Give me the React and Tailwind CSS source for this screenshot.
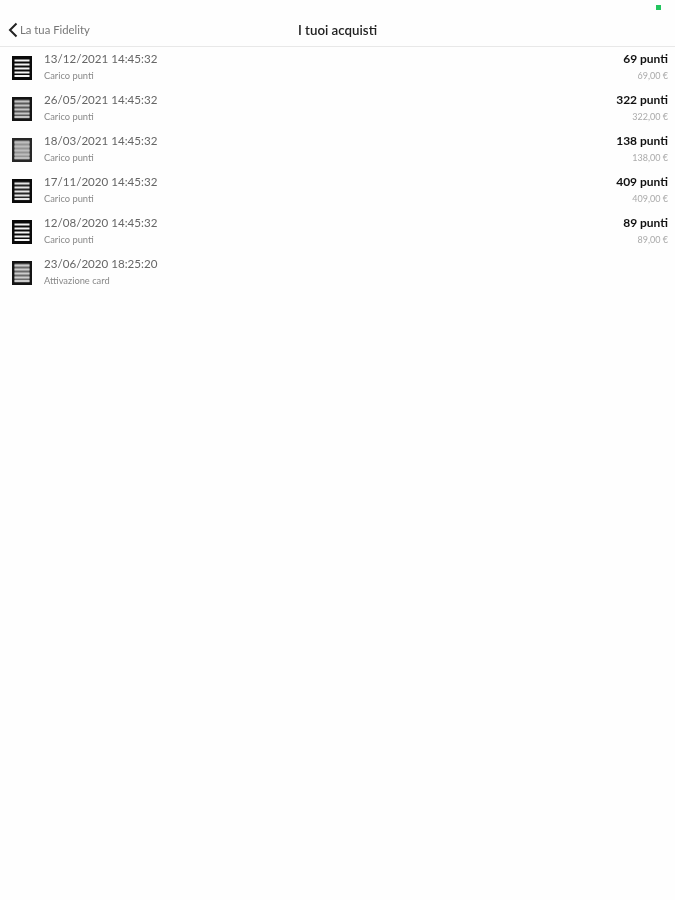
const rows = [
  { date: "13/12/2021 14:45:32", sub: "Carico punti", pts: "69 punti", eur: "69,00 €", line: "#f4f4f4", inner: "#0a0a0a", frame: "#0a0a0a" },
  { date: "26/05/2021 14:45:32", sub: "Carico punti", pts: "322 punti", eur: "322,00 €", line: "#c4c4c4", inner: "#5a5a5a", frame: "#141414" },
  { date: "18/03/2021 14:45:32", sub: "Carico punti", pts: "138 punti", eur: "138,00 €", line: "#bdbdbd", inner: "#949494", frame: "#262626" },
  { date: "17/11/2020 14:45:32", sub: "Carico punti", pts: "409 punti", eur: "409,00 €", line: "#e4e4e4", inner: "#262626", frame: "#0a0a0a" },
  { date: "12/08/2020 14:45:32", sub: "Carico punti", pts: "89 punti", eur: "89,00 €", line: "#f4f4f4", inner: "#0a0a0a", frame: "#0a0a0a" },
  { date: "23/06/2020 18:25:20", sub: "Attivazione card", pts: "", eur: "", line: "#cccccc", inner: "#6a6a6a", frame: "#141414" },
];

function DocIcon({ line, inner, frame }) {
  return (
    <svg width="20" height="24" viewBox="0 0 20 24" className="shrink-0">
      <rect x="0" y="0" width="20" height="24" fill={frame} />
      <rect x="2.5" y="2.5" width="15" height="19" fill={inner} />
      {[3.5, 7.5, 11.5, 15.5, 19].map((y) => (
        <rect key={y} x="2.5" y={y} width="15" height="2" fill={line} />
      ))}
    </svg>
  );
}

export default function App() {
  return (
    <div className="min-h-[900px] bg-[#fefefe] font-['Lato','Liberation_Sans',sans-serif] blur-[0.5px]">
      <div className="flex justify-end h-[14px] pr-[14px] pt-[5px]">
        <div className="w-[5px] h-[5px] bg-[#22c55e]" />
      </div>
      <header className="relative h-[33px] border-b border-[#e8e8e8] flex items-center justify-center">
        <div className="absolute left-[8px] top-[8px] flex items-center gap-[2px]">
          <svg width="10" height="16" viewBox="0 0 10 16" fill="none">
            <path d="M8.5 1.5 L2 8 L8.5 14.5" stroke="#222" strokeWidth="2" />
          </svg>
          <span className="text-[11.3px] leading-[16px] text-[#777]">La tua Fidelity</span>
        </div>
        <span className="text-[13.3px] leading-[16px] text-[#222] font-semibold">I tuoi acquisti</span>
      </header>
      <main>
        {rows.map((r) => (
          <div key={r.date} className="h-[41px] flex items-center pl-[12px] pr-[7px] gap-[12px]">
            <DocIcon line={r.line} inner={r.inner} frame={r.frame} />
            <div className="flex-1 flex flex-col gap-[5px] pb-[2px]">
              <div className="flex justify-between items-center h-[14px]">
                <span className="text-[11.6px] text-[#666]">{r.date}</span>
                <span className="text-[12px] font-bold text-[#111]">{r.pts}</span>
              </div>
              <div className="flex justify-between items-center h-[10px]">
                <span className="text-[9.3px] text-[#888]">{r.sub}</span>
                <span className="text-[9px] text-[#aaa]">{r.eur}</span>
              </div>
            </div>
          </div>
        ))}
      </main>
    </div>
  );
}
